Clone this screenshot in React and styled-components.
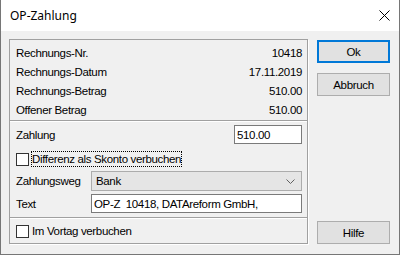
import React from "react";
import styled, { createGlobalStyle } from "styled-components";

const GlobalStyle = createGlobalStyle`
  html, body {
    margin: 0;
    padding: 0;
    background: #ffffff;
  }
  * {
    box-sizing: border-box;
  }
`;

const invoiceRows = [
  { label: "Rechnungs-Nr.", value: "10418" },
  { label: "Rechnungs-Datum", value: "17.11.2019" },
  { label: "Rechnungs-Betrag", value: "510.00" },
  { label: "Offener Betrag", value: "510.00" },
];

function App() {
  return (
    <>
      <GlobalStyle />
      <Window>
        <TitleBar>
          <Title>OP-Zahlung</Title>
          <CloseButton aria-label="Schließen">
            <svg width="11" height="11" viewBox="0 0 11 11">
              <path d="M0.5 0.5 L10.5 10.5 M10.5 0.5 L0.5 10.5" stroke="#000" strokeWidth="1" fill="none" />
            </svg>
          </CloseButton>
        </TitleBar>
        <Body>
          <Group>
            <InfoSection>
              {invoiceRows.map((r) => (
                <InfoRow key={r.label}>
                  <span>{r.label}</span>
                  <span>{r.value}</span>
                </InfoRow>
              ))}
            </InfoSection>
            <Separator />
            <FormSection>
              <FormRow $h={19}>
                <Label>Zahlung</Label>
                <TextBox $w={68} $right defaultValue="510.00" />
              </FormRow>
              <FormRow $h={16} $mt={7}>
                <CheckBox />
                <FocusLabel>Differenz als Skonto verbuchen</FocusLabel>
              </FormRow>
              <FormRow $h={20} $mt={4}>
                <Label $w={75}>Zahlungsweg</Label>
                <Combo>
                  <span>Bank</span>
                  <svg width="9" height="5" viewBox="0 0 9 5">
                    <path d="M0.5 0.5 L4.5 4.5 L8.5 0.5" stroke="#606060" strokeWidth="1" fill="none" />
                  </svg>
                </Combo>
              </FormRow>
              <FormRow $h={19} $mt={3}>
                <Label $w={75}>Text</Label>
                <TextBox $grow defaultValue="OP-Z  10418, DATAreform GmbH," />
              </FormRow>
            </FormSection>
            <Separator />
            <BottomSection>
              <CheckBox />
              <PlainLabel>Im Vortag verbuchen</PlainLabel>
            </BottomSection>
          </Group>
          <Buttons>
            <Button $default>Ok</Button>
            <Button>Abbruch</Button>
            <Button $push>Hilfe</Button>
          </Buttons>
        </Body>
      </Window>
    </>
  );
}

export default App;

const Window = styled.div`
  width: 400px;
  height: 255px;
  display: flex;
  flex-direction: column;
  border-left: 1px solid #767676;
  border-right: 1px solid #767676;
  border-bottom: 1px solid #767676;
  font-family: "Liberation Sans", Arial, sans-serif;
  font-size: 11.5px;
  letter-spacing: -0.35px;
  color: #000;
`;

const TitleBar = styled.div`
  height: 31px;
  flex-shrink: 0;
  background: #ffffff;
  display: flex;
  align-items: center;
  justify-content: space-between;
  padding: 0 9px 0 9px;
`;

const Title = styled.div`
  font-family: "Noto Sans", "Open Sans", sans-serif;
  font-size: 12px;
  letter-spacing: 0;
  padding-bottom: 1px;
`;

const CloseButton = styled.div`
  width: 11px;
  height: 11px;
  display: flex;
  svg {
    display: block;
  }
`;

const Body = styled.div`
  flex: 1;
  background: #f0f0f0;
  display: flex;
  gap: 9px;
  padding: 8px 9px 10px 8px;
`;

const Group = styled.div`
  width: 299px;
  height: 205px;
  border: 1px solid #a0a0a0;
  box-shadow: 1px 1px 0 #ffffff;
  display: flex;
  flex-direction: column;
`;

const InfoSection = styled.div`
  padding: 3px 5px 1px 6px;
  display: flex;
  flex-direction: column;
`;

const InfoRow = styled.div`
  height: 19px;
  display: flex;
  align-items: center;
  justify-content: space-between;
`;

const Separator = styled.div`
  height: 2px;
  border-top: 1px solid #a0a0a0;
  border-bottom: 1px solid #ffffff;
`;

const FormSection = styled.div`
  padding: 3px 5px 4px 6px;
  display: flex;
  flex-direction: column;
`;

const FormRow = styled.div`
  height: ${(p) => p.$h}px;
  margin-top: ${(p) => p.$mt || 0}px;
  display: flex;
  align-items: center;
`;

const Label = styled.span`
  width: ${(p) => (p.$w ? `${p.$w}px` : "auto")};
  flex-shrink: 0;
`;

const TextBox = styled.input`
  height: 100%;
  width: ${(p) => (p.$w ? `${p.$w}px` : "auto")};
  flex: ${(p) => (p.$grow ? 1 : "none")};
  margin-left: ${(p) => (p.$right ? "auto" : "0")};
  border: 1px solid #7a7a7a;
  background: #ffffff;
  padding: 0 2px;
  font: inherit;
  letter-spacing: inherit;
  color: #000;
  white-space: pre;
  outline: none;
`;

const CheckBox = styled.span`
  width: 13px;
  height: 13px;
  border: 1px solid #333333;
  background: #ffffff;
  flex-shrink: 0;
`;

const FocusLabel = styled.span`
  margin-left: 2px;
  padding: 0 1px;
  height: 16px;
  display: flex;
  align-items: center;
  outline: 1px dotted #000;
  outline-offset: -1px;
`;

const PlainLabel = styled.span`
  margin-left: 3px;
`;

const Combo = styled.div`
  flex: 1;
  height: 100%;
  background: #e5e5e5;
  border: 1px solid #acacac;
  display: flex;
  align-items: center;
  justify-content: space-between;
  padding: 0 6px 0 4px;
  svg {
    display: block;
  }
`;

const BottomSection = styled.div`
  flex: 1;
  display: flex;
  align-items: center;
  padding: 0 5px 0 6px;
`;

const Buttons = styled.div`
  width: 73px;
  display: flex;
  flex-direction: column;
  gap: 10px;
  padding-top: 1px;
`;

const Button = styled.div`
  height: 23px;
  display: flex;
  align-items: center;
  justify-content: center;
  background: #e1e1e1;
  border: ${(p) => (p.$default ? "2px solid #0078d7" : "1px solid #adadad")};
  margin-top: ${(p) => (p.$push ? "auto" : "0")};
`;
